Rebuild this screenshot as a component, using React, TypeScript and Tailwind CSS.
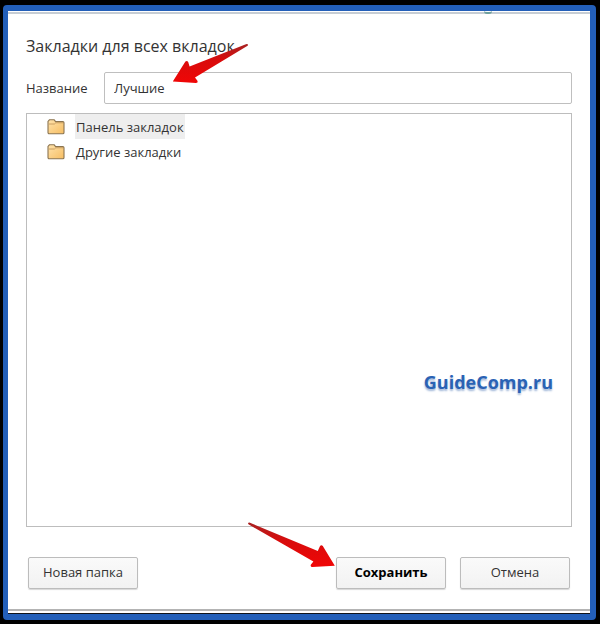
import { useState } from 'react';

const FOLDERS = [
  { id: 'bar', title: 'Панель закладок' },
  { id: 'other', title: 'Другие закладки' },
];

const BUTTON =
  'h-8 w-[110px] shrink-0 rounded-xs border border-[#bcbcbc] bg-linear-to-b from-[#fafafa] to-[#f2f2f2] text-[13px] shadow-[0_1px_1px_#d8d8d8] text-[#333]';

const FolderIcon = () => (
  <svg width="18" height="16" viewBox="0 0 18 16" className="shrink-0" aria-hidden="true">
    <defs>
      <linearGradient id="folder-fill" x1="0" y1="0" x2="1" y2="1">
        <stop offset="0" stopColor="#ffe3ac" />
        <stop offset="1" stopColor="#f6bd62" />
      </linearGradient>
    </defs>
    <path
      d="M1 13.5V2.4L2.4 0.8H7.2L8.6 2.6H15.8Q17 2.6 17 3.8V13.5Q17 14.8 15.8 14.8H2.2Q1 14.8 1 13.5Z"
      fill="url(#folder-fill)"
      stroke="#8b7450"
      strokeWidth="1.1"
    />
    <path d="M2 5H7.4L8.8 3.8H16" fill="none" stroke="#c49a5e" strokeWidth="0.9" />
  </svg>
);

const ArrowDefs = ({ id }: { id: string }) => (
  <defs>
    <linearGradient id={id} x1="0" y1="0" x2="0" y2="1">
      <stop offset="0" stopColor="#a82222" />
      <stop offset="0.4" stopColor="#d80c0c" />
      <stop offset="1" stopColor="#f00606" />
    </linearGradient>
  </defs>
);

export default function App() {
  const [name, setName] = useState('Лучшие');
  const [selected, setSelected] = useState('bar');

  return (
    <div className="flex min-h-screen flex-col bg-black pt-[5px] pr-1 pb-1 pl-[3px] font-['Open_Sans','Noto_Sans',sans-serif] text-[#333]">
      <div className="flex flex-1 flex-col rounded-sm border-t-[6px] border-r-[6px] border-b-[6px] border-l-[5px] border-[#235fb9] bg-white">
        {/* Toolbar edge left showing above the dialog */}
        <div className="flex h-[3px] justify-end border-b-2 border-[#c6cdd4] pr-[98px]">
          <span className="h-[3px] w-2 rounded-b-full border-b-2 border-[#6fa09d]" />
        </div>

        <form
          onSubmit={e => e.preventDefault()}
          className="flex flex-1 flex-col border-b-2 border-[#b3b3b3] px-[18px] pt-5 pb-5"
        >
          <h1 className="text-base leading-6">Закладки для всех вкладок</h1>

          {/* Name */}
          <div className="relative mt-[14px] flex items-center">
            <label htmlFor="name" className="w-[78px] shrink-0 pt-0.5 text-[13px]">
              Название
            </label>
            <input
              id="name"
              value={name}
              onChange={e => setName(e.target.value)}
              className="h-8 min-w-0 flex-1 rounded-xs border border-[#bfbfbf] bg-white px-[9px] text-[13px] outline-none"
            />
            <svg
              width="80"
              height="44"
              viewBox="170 40 80 44"
              className="pointer-events-none absolute bottom-5 left-36"
              aria-hidden="true"
            >
              <ArrowDefs id="arrow-name" />
              <path
                d="M172.8 81.4L185.4 61.6Q187 60 188.2 62L189.6 66.6L246.5 44Q249 44.2 247.6 45.8L195 77.6L197.6 81Q198.2 82.9 196 82.9Z"
                fill="url(#arrow-name)"
              />
            </svg>
          </div>

          {/* Folder tree */}
          <div className="relative mt-[9px] flex-1 border border-[#bdbdbd] pl-5">
            <ul>
              {FOLDERS.map(folder => (
                <li key={folder.id} className="flex h-[25px] items-center gap-[10px]">
                  <FolderIcon />
                  <button
                    type="button"
                    onClick={() => setSelected(folder.id)}
                    className={
                      selected === folder.id
                        ? 'h-[25px] bg-[#eee] px-px pt-0.5 text-[13px]'
                        : 'h-[25px] px-px pt-0.5 text-[13px]'
                    }
                  >
                    {folder.title}
                  </button>
                </li>
              ))}
            </ul>
            <span className="absolute right-[18px] bottom-[130px] text-lg leading-7 font-bold text-[#2a62b4] [text-shadow:0_2px_2px_#9fb6d8,0_1px_0_#fff]">
              GuideComp.ru
            </span>
          </div>

          {/* Actions */}
          <div className="relative mt-[30px] flex gap-[14px] px-0.5">
            <button type="button" className={BUTTON}>
              Новая папка
            </button>
            <span className="flex-1" />
            <div className="relative">
              <button type="submit" className={BUTTON}>
                <span className="font-bold text-black">Сохранить</span>
              </button>
              <svg
                width="90"
                height="48"
                viewBox="246 520 90 48"
                className="pointer-events-none absolute right-full bottom-5 -mr-0.5 max-w-none"
                aria-hidden="true"
              >
                <ArrowDefs id="arrow-save" />
                <path
                  d="M332.8 564.8L320.8 545Q319.2 543.2 317.8 545.4L315.8 550L247.4 521.6Q245 522 246.8 523.6L311.4 560.4L308.8 563.8Q308.2 566 310.4 566Z"
                  fill="url(#arrow-save)"
                />
              </svg>
            </div>
            <button type="button" className={BUTTON}>
              Отмена
            </button>
          </div>
        </form>

        <div className="h-[3px] border-b border-[#10131a]" />
      </div>
    </div>
  );
}
